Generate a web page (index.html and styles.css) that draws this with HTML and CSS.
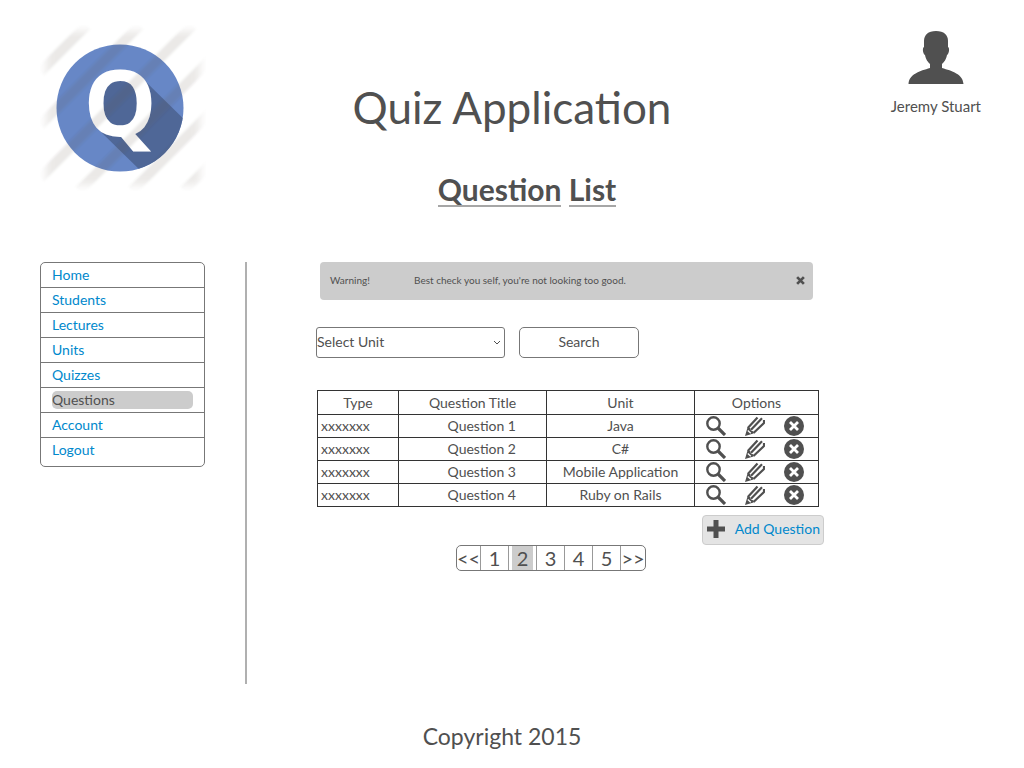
FILE: index.html
```html
<!DOCTYPE html>
<html lang="en">
<head>
<meta charset="utf-8">
<title>Quiz Application</title>
<link rel="stylesheet" href="styles.css">
</head>
<body>
<svg class="defs" aria-hidden="true">
  <symbol id="view" viewBox="0 0 20 20"><circle cx="7.500" cy="7.500" r="6.200" fill="none" stroke="currentColor" stroke-width="2.400"/><path d="M12 12l7 7" stroke="currentColor" stroke-width="3.200" fill="none"/></symbol>
  <symbol id="edit" viewBox="0 0 20 20"><path d="M0 20L2.500 11.500L5 12L6 14.500L8.500 15.500L8.500 17.500Z" fill="currentColor"/><path d="M2.800 12L12.500 1.500M6 13.700L17 2.200M8.500 17L19 7V4" fill="none" stroke="currentColor" stroke-width="2.200"/><path d="M2.800 14.500L5.800 17.300" stroke="#fff" stroke-width="1.300"/></symbol>
  <symbol id="remove" viewBox="0 0 20 20"><circle cx="10" cy="10" r="10" fill="currentColor"/><path d="M6 6l8 8M14 6l-8 8" stroke="#fff" stroke-width="2.800" fill="none"/></symbol>
</svg>
<header class="header">
  <svg class="logo" viewBox="0 0 166 166" role="img" aria-label="Quiz logo">
    <defs>
      <clipPath id="disc"><circle cx="80" cy="83" r="63.500"/></clipPath>
      <filter id="soft" x="-10%" y="-10%" width="120%" height="120%"><feGaussianBlur stdDeviation="4"/></filter>
      <filter id="haze" filterUnits="userSpaceOnUse" x="0" y="0" width="166" height="166"><feGaussianBlur stdDeviation="1"/></filter>
      <mask id="fade" maskUnits="userSpaceOnUse" x="0" y="0" width="166" height="166"><rect x="6" y="6" width="154" height="154" fill="#fff" filter="url(#soft)"/></mask>
    </defs>
    <circle cx="80" cy="83" r="63.500" fill="#6787c6"/>
    <path d="M104 55L150 100V150H105L60 106Z" fill="#4f6797" clip-path="url(#disc)"/>
    <ellipse cx="80" cy="78" rx="20" ry="25" fill="#4f6797"/>
    <text class="logo-letter" x="80" y="111" text-anchor="middle">Q</text>
    <g mask="url(#fade)"><path filter="url(#haze)" d="M47 0L0 47M100 0L0 100M153 0L0 153M205 0L39 166M258 0L92 166M310 0L144 166" stroke="#605848" stroke-opacity=".13" stroke-width="10" fill="none"/></g>
  </svg>
  <div class="titles">
    <h1 class="title">Quiz Application</h1>
    <h2 class="subtitle"><span>Question</span> <span>List</span></h2>
  </div>
  <div class="user">
    <svg class="avatar" viewBox="0 0 56 54" aria-hidden="true"><path d="M28 1C36 1 40 5 40 11V17C42 18 41 24 39 25C38 30 36 32 34 34V38C44 41 55 44 55.500 54H0.500C1 44 12 41 22 38V34C20 32 18 30 17 25C15 24 14 18 16 17V11C16 5 20 1 28 1Z" fill="currentColor"/></svg>
    <span>Jeremy Stuart</span>
  </div>
</header>
<div class="layout">
  <nav class="menu">
    <a href="#">Home</a>
    <a href="#">Students</a>
    <a href="#">Lectures</a>
    <a href="#">Units</a>
    <a href="#">Quizzes</a>
    <a href="#" class="current" aria-current="page"><span>Questions</span></a>
    <a href="#">Account</a>
    <a href="#">Logout</a>
  </nav>
  <main class="main">
    <div class="content">
      <div class="alert" role="alert">
        <span class="alert-label">Warning!</span>
        <span class="alert-text">Best check you self, you're not looking too good.</span>
        <button class="close" type="button" aria-label="Close"><svg viewBox="0 0 8 8" aria-hidden="true"><path d="M1 1l6 6M7 1l-6 6" stroke="currentColor" stroke-width="2.400"/></svg></button>
      </div>
      <form class="filter">
        <div class="select-wrap">
          <select class="select" aria-label="Select Unit"><option>Select Unit</option></select>
          <svg class="chevron" viewBox="0 0 8 5" aria-hidden="true"><path d="M1 1l3 3 3-3" fill="none" stroke="currentColor"/></svg>
        </div>
        <button class="search" type="button">Search</button>
      </form>
      <table class="table">
        <colgroup><col class="col-type"><col class="col-title"><col class="col-unit"><col class="col-options"></colgroup>
        <thead><tr><th>Type</th><th>Question Title</th><th>Unit</th><th>Options</th></tr></thead>
        <tbody>
          <tr><td>xxxxxxx</td><td>Question 1</td><td>Java</td><td><div class="actions"><button type="button" aria-label="View"><svg><use href="#view"/></svg></button><button type="button" aria-label="Edit"><svg><use href="#edit"/></svg></button><button type="button" aria-label="Delete"><svg><use href="#remove"/></svg></button></div></td></tr>
          <tr><td>xxxxxxx</td><td>Question 2</td><td>C#</td><td><div class="actions"><button type="button" aria-label="View"><svg><use href="#view"/></svg></button><button type="button" aria-label="Edit"><svg><use href="#edit"/></svg></button><button type="button" aria-label="Delete"><svg><use href="#remove"/></svg></button></div></td></tr>
          <tr><td>xxxxxxx</td><td>Question 3</td><td>Mobile Application</td><td><div class="actions"><button type="button" aria-label="View"><svg><use href="#view"/></svg></button><button type="button" aria-label="Edit"><svg><use href="#edit"/></svg></button><button type="button" aria-label="Delete"><svg><use href="#remove"/></svg></button></div></td></tr>
          <tr><td>xxxxxxx</td><td>Question 4</td><td>Ruby on Rails</td><td><div class="actions"><button type="button" aria-label="View"><svg><use href="#view"/></svg></button><button type="button" aria-label="Edit"><svg><use href="#edit"/></svg></button><button type="button" aria-label="Delete"><svg><use href="#remove"/></svg></button></div></td></tr>
        </tbody>
      </table>
      <button class="add" type="button"><svg viewBox="0 0 18 18" aria-hidden="true"><path d="M9 0v18M0 9h18" stroke="currentColor" stroke-width="5"/></svg>Add Question</button>
      <nav class="pages" aria-label="Pages">
        <a href="#">&lt;&lt;</a><a href="#">1</a><a href="#" aria-current="page"><span>2</span></a><a href="#">3</a><a href="#">4</a><a href="#">5</a><a href="#">&gt;&gt;</a>
      </nav>
    </div>
  </main>
</div>
<footer class="footer">Copyright 2015</footer>
</body>
</html>
```
FILE: styles.css
```css
* {
  box-sizing: border-box;
}

body {
  margin: 0;
  padding: 25px 40px 16px;
  background: #fff;
  color: #505050;
  font: 14px/20px Lato, sans-serif;
}

button,
select {
  font: inherit;
  color: inherit;
}

a {
  text-decoration: none;
}

.defs {
  position: absolute;
  width: 0;
  height: 0;
}

.header {
  display: grid;
  grid-template-columns: 166px 1fr 166px;
}

.logo {
  width: 166px;
  height: 166px;
}

.logo-letter {
  font: bold 92px "Open Sans", sans-serif;
  fill: #fff;
}

.titles {
  text-align: center;
}

.title {
  margin: 52px 0 0;
  font-size: 44px;
  line-height: 60px;
  font-weight: 400;
}

.subtitle {
  margin: 37px 0 0 30px;
  font-size: 30px;
  line-height: 30px;
  font-weight: 700;
}

.subtitle span {
  display: inline-block;
  padding-bottom: 1px;
  border-bottom: 2px solid #a6a6a6;
}

.user {
  display: flex;
  flex-direction: column;
  align-items: center;
  justify-self: end;
  gap: 12px;
  padding: 5px 3px 0 0;
  font-size: 15px;
}

.avatar {
  width: 56px;
  height: 54px;
}

.layout {
  display: flex;
  gap: 40px;
  align-items: flex-start;
  margin-top: 55px;
}

.menu {
  width: 165px;
  padding-bottom: 3px;
  border: 1px solid #777;
  border-radius: 5px;
}

.menu a {
  display: block;
  height: 25px;
  padding: 2px 11px;
  border-bottom: 1px solid #777;
  color: #08c;
}

.menu a:last-child {
  border-bottom: 0;
}

.menu .current {
  padding-top: 3px;
  color: #505050;
}

.current span {
  display: block;
  line-height: 18px;
  border-radius: 5px;
  background: #ccc;
}

.main {
  flex: 1;
  min-height: 422px;
  padding-left: 69px;
  border-left: 2px solid #b0b0b0;
}

.content {
  display: flex;
  flex-direction: column;
  max-width: 508px;
}

.alert {
  display: flex;
  align-items: center;
  height: 38px;
  margin: 0 11px 0 4px;
  padding: 0 8px 2px 10px;
  border-radius: 4px;
  background: #ccc;
  font-size: 10px;
}

.alert-label {
  width: 84px;
}

.alert-text {
  flex: 1;
}

.close {
  display: flex;
  padding: 0;
  border: 0;
  background: none;
}

.close svg {
  width: 9px;
  height: 9px;
}

.filter {
  display: flex;
  gap: 14px;
  align-items: flex-end;
  margin-top: 27px;
}

.select-wrap {
  position: relative;
  width: 189px;
}

.select {
  display: block;
  appearance: none;
  width: 100%;
  height: 31px;
  padding: 0 20px 2px 0;
  border: 1px solid #777;
  border-radius: 3px;
  background: #fff;
}

.chevron {
  position: absolute;
  right: 4px;
  top: 13px;
  width: 8px;
  height: 5px;
  pointer-events: none;
}

.search {
  width: 120px;
  height: 31px;
  padding: 0 0 2px;
  border: 1px solid #777;
  border-radius: 5px;
  background: #fff;
}

.table {
  table-layout: fixed;
  margin: 32px 5px 0 1px;
  border-collapse: collapse;
  text-align: center;
}

.col-type {
  width: 81px;
}

.col-title,
.col-unit {
  width: 148px;
}

.table tr {
  height: 23px;
}

.table thead tr {
  height: 24px;
}

.table th,
.table td {
  padding: 0;
  border: 1px solid #333;
  font-weight: 400;
}

.table td:first-child {
  padding-left: 3px;
  text-align: left;
}

.table td:nth-child(2) {
  padding-right: 30px;
  text-align: right;
}

.actions {
  display: flex;
  justify-content: center;
  gap: 19px;
  padding-right: 4px;
}

.actions button {
  display: flex;
  padding: 0;
  border: 0;
  background: none;
}

.actions svg {
  width: 20px;
  height: 20px;
}

.add {
  display: flex;
  align-items: center;
  align-self: flex-end;
  gap: 10px;
  height: 30px;
  margin-top: 8px;
  padding: 0 3px 2px 4px;
  border: 1px solid #ccc;
  border-radius: 4px;
  background: #e4e4e4;
  color: #08c;
}

.add svg {
  width: 18px;
  height: 18px;
  color: #505050;
}

.pages {
  display: grid;
  grid-template-columns: 24px repeat(5, 28px) 24px;
  align-self: center;
  margin-right: 38px;
  border: 1px solid #777;
  border-radius: 5px;
  font-size: 20px;
  line-height: 24px;
  text-align: center;
}

.pages a {
  border-right: 1px solid #999;
  color: inherit;
}

.pages a:last-child {
  border-right: 0;
}

.pages span {
  display: block;
  margin: 0 3px;
  background: #ccc;
}

.footer {
  margin-top: 37px;
  padding-right: 20px;
  font-size: 23px;
  line-height: 30px;
  text-align: center;
}
```
